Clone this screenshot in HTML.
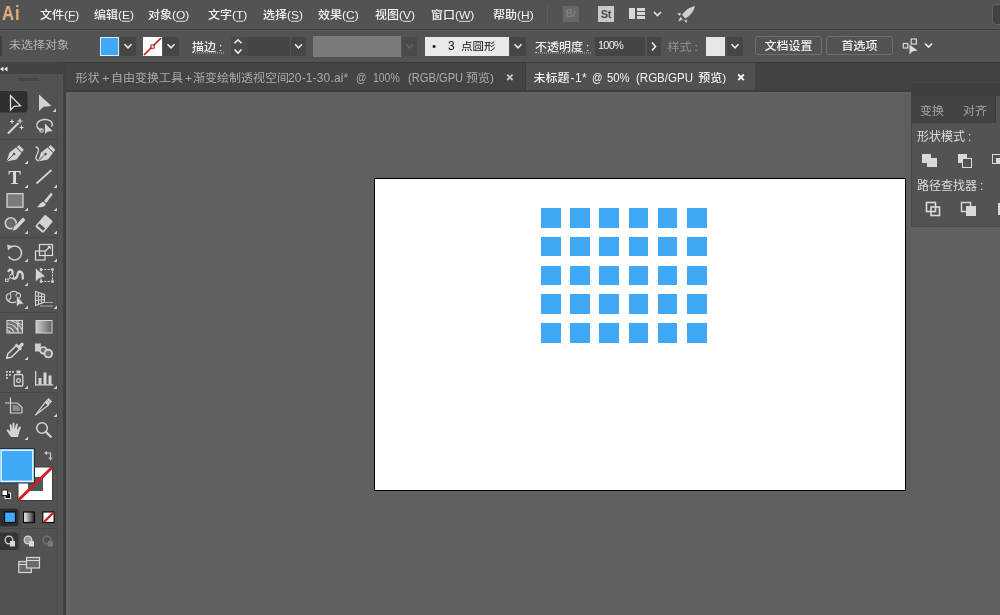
<!DOCTYPE html>
<html lang="zh-CN">
<head>
<meta charset="utf-8">
<title>Adobe Illustrator</title>
<style>
*{box-sizing:border-box;margin:0;padding:0}
html,body{width:1000px;height:615px;overflow:hidden;background:#606060}
body{position:relative;font-family:"Liberation Sans","Noto Sans CJK SC",sans-serif;font-size:12px;color:#e6e6e6;line-height:1}
.abs{position:absolute}
#menubar,#ctrl,#tabbar,#rpanel,#toolsvg{will-change:transform}
#menubar{left:0;top:0;width:1000px;height:30px;background:#535353;border-bottom:1px solid #3b3b3b;box-shadow:inset 0 -1px 0 #5a5a5a}
#menubar .mi{position:absolute;top:8px;height:14px;line-height:14px;white-space:nowrap;color:#f2f2f2;font-size:12px;font-weight:500;transform:scaleY(0.9);transform-origin:0 11px}
#menubar u{text-decoration:underline;text-underline-offset:2px}
#logo{left:2.4px;top:1px;font-size:21px;font-weight:bold;color:#e0ae78;line-height:24px;letter-spacing:1.2px;transform:scaleX(0.8);transform-origin:0 0}
#ctrl{left:0;top:29px;width:1000px;height:33px;background:#535353;box-shadow:inset 0 1px 0 #3b3b3b,inset 0 2px 0 #5a5a5a}
#ctrl .t{position:absolute;white-space:nowrap;line-height:14px;height:14px;font-size:12px;transform:scaleY(0.9);transform-origin:0 8px}
.pl{transform:scaleY(0.9);transform-origin:0 9px}
.seg{position:absolute;top:9px;line-height:14px;height:14px;white-space:nowrap;transform:scaleY(0.9);transform-origin:0 8px}
.btn{border:1px solid #707070;border-radius:3px;color:#f0f0f0;text-align:center;line-height:18px;font-size:12px;font-weight:500}
.btn span{display:inline-block;transform:scaleY(0.9);transform-origin:0 11px}
.dk{position:absolute;background:#454545;border-radius:2px}
#tabbar{left:0;top:62px;width:1000px;height:30px;background:#424242;box-shadow:inset 0 1px 0 #3a3a3a}
#tools{left:0;top:74px;width:63px;height:541px;background:#525252}
#toolgap{left:63px;top:92px;width:3px;height:523px;background:#404040}
#toolhead{left:0;top:62px;width:63px;height:12px;background:#424242}
#canvas{left:66px;top:92px;width:934px;height:523px;background:#606060;box-shadow:inset 0 2px 0 #646464,inset 4px 0 0 #656565}
#vstrip{left:905px;top:94px;width:6px;height:396px;background:#5e5e5e;border-left:1px solid #5a5a5a}
#artboard{left:374px;top:178px;width:532px;height:313px;background:#fff;border:1px solid #000}
.sq{position:absolute;width:19.5px;height:19.5px;background:#3fa9f5}
#rpanel{left:911px;top:82px;width:89px;height:145px;background:#535353;box-shadow:inset 1px 0 0 #454545,inset 0 -1px 0 #484848}
svg{position:absolute;overflow:visible}
</style>
</head>
<body>
<div id="canvas" class="abs"></div>
<div id="vstrip" class="abs"></div>
<div id="artboard" class="abs"></div>
<div id="grid">
<div class="sq" style="left:541.0px;top:208.0px"></div><div class="sq" style="left:570.2px;top:208.0px"></div><div class="sq" style="left:599.4px;top:208.0px"></div><div class="sq" style="left:628.6px;top:208.0px"></div><div class="sq" style="left:657.8px;top:208.0px"></div><div class="sq" style="left:687.0px;top:208.0px"></div>
<div class="sq" style="left:541.0px;top:236.8px"></div><div class="sq" style="left:570.2px;top:236.8px"></div><div class="sq" style="left:599.4px;top:236.8px"></div><div class="sq" style="left:628.6px;top:236.8px"></div><div class="sq" style="left:657.8px;top:236.8px"></div><div class="sq" style="left:687.0px;top:236.8px"></div>
<div class="sq" style="left:541.0px;top:265.5px"></div><div class="sq" style="left:570.2px;top:265.5px"></div><div class="sq" style="left:599.4px;top:265.5px"></div><div class="sq" style="left:628.6px;top:265.5px"></div><div class="sq" style="left:657.8px;top:265.5px"></div><div class="sq" style="left:687.0px;top:265.5px"></div>
<div class="sq" style="left:541.0px;top:294.2px"></div><div class="sq" style="left:570.2px;top:294.2px"></div><div class="sq" style="left:599.4px;top:294.2px"></div><div class="sq" style="left:628.6px;top:294.2px"></div><div class="sq" style="left:657.8px;top:294.2px"></div><div class="sq" style="left:687.0px;top:294.2px"></div>
<div class="sq" style="left:541.0px;top:323.0px"></div><div class="sq" style="left:570.2px;top:323.0px"></div><div class="sq" style="left:599.4px;top:323.0px"></div><div class="sq" style="left:628.6px;top:323.0px"></div><div class="sq" style="left:657.8px;top:323.0px"></div><div class="sq" style="left:687.0px;top:323.0px"></div>
</div>
<div id="menubar" class="abs">
  <div id="logo" class="abs">Ai</div>
  <span class="mi" style="left:40px">文件(<u>F</u>)</span>
  <span class="mi" style="left:94px">编辑(<u>E</u>)</span>
  <span class="mi" style="left:148px">对象(<u>O</u>)</span>
  <span class="mi" style="left:208px">文字(<u>T</u>)</span>
  <span class="mi" style="left:263px">选择(<u>S</u>)</span>
  <span class="mi" style="left:318px">效果(<u>C</u>)</span>
  <span class="mi" style="left:375px">视图(<u>V</u>)</span>
  <span class="mi" style="left:431px">窗口(<u>W</u>)</span>
  <span class="mi" style="left:493px">帮助(<u>H</u>)</span>

  <div class="abs" style="left:547px;top:5px;width:1px;height:20px;background:#5e5e5e"></div>
  <div class="abs" style="left:563px;top:6px;width:16px;height:16px;background:#676767;color:#7d7d7d;font-size:10px;font-weight:bold;line-height:16px;text-align:center;letter-spacing:-0.3px">Br</div>
  <div class="abs" style="left:598px;top:6px;width:16px;height:16px;background:#c9c9c9;color:#4a4a4a;font-size:11px;font-weight:bold;line-height:16px;text-align:center;letter-spacing:-0.3px">St</div>
  <svg style="left:629px;top:7px" width="70" height="16" viewBox="629 7 70 16">
    <rect x="629" y="8" width="6" height="11" fill="#d8d8d8"/>
    <rect x="637" y="8" width="8" height="3" fill="#d8d8d8"/>
    <rect x="637" y="12" width="8" height="3" fill="#d8d8d8"/>
    <rect x="637" y="16" width="8" height="3" fill="#d8d8d8"/>
    <path d="M654 12 L657.5 15.5 L661 12" fill="none" stroke="#e4e4e4" stroke-width="1.6"/>
    <path d="M695 6 C690 7 685 10 682 15 L685.5 18.5 C690.5 15.5 694 11 695 6 Z M681 13 L677 13.5 L680 16 Z M687 19.5 L686.5 23 L684 20.5 Z M680.5 17 L678 21.5 L683 19.5 Z" fill="#cfcfcf"/>
  </svg>
  <div class="abs" style="left:992px;top:4px;width:12px;height:21px;background:#414141;border:1px solid #616161;border-radius:4px"></div>
</div>
<div id="ctrl" class="abs">
  <div class="abs" style="left:0;top:7px;width:2px;height:20px;background:#414141"></div>
  <span class="t" style="left:9px;top:9px;color:#b4b4b4">未选择对象</span>
  <div class="abs" style="left:100px;top:8px;width:19px;height:19px;background:#3fa9f5;border:1px solid #d6efff"></div>
  <div class="dk" style="left:120px;top:8px;width:16px;height:19px"></div>
  <div class="abs" style="left:143px;top:8px;width:19px;height:19px;background:#fff"></div>
  <div class="dk" style="left:163px;top:8px;width:16px;height:19px"></div>
  <span class="t" style="left:192px;top:11px;color:#f0f0f0;font-weight:500;border-bottom:1px dotted #c4c4c4;height:14px;width:32px">描边<span style="margin-left:3px">:</span></span>
  <div class="dk" style="left:231px;top:8px;width:16px;height:19px;background:#4a4a4a"></div>
  <div class="dk" style="left:247px;top:8px;width:43px;height:19px;border-radius:0"></div>
  <div class="dk" style="left:291px;top:8px;width:15px;height:19px"></div>
  <div class="abs" style="left:313px;top:7px;width:88px;height:21px;background:#7b7b7b"></div>
  <div class="dk" style="left:402px;top:8px;width:15px;height:19px;background:#4a4a4a"></div>
  <div class="abs" style="left:425px;top:8px;width:84px;height:19px;background:#e9e9e9"></div>
  <span class="t" style="left:432px;top:10px;color:#111">•</span>
  <span class="t" style="left:448px;top:10px;color:#111;transform:none">3</span>
  <span class="t" style="left:461px;top:10px;color:#111;font-size:11.5px">点圆形</span>
  <div class="dk" style="left:510px;top:8px;width:16px;height:19px"></div>
  <span class="t" style="left:535px;top:11px;color:#f0f0f0;font-weight:500;border-bottom:1px dotted #c4c4c4;height:14px;width:56px">不透明度<span style="margin-left:3px">:</span></span>
  <div class="dk" style="left:595px;top:8px;width:50px;height:19px;border-radius:0"></div>
  <span class="t" style="left:598px;top:9px;color:#f0f0f0;font-size:11px;letter-spacing:-0.8px;transform:none">100%</span>
  <div class="dk" style="left:647px;top:8px;width:14px;height:19px"></div>
  <span class="t" style="left:667.5px;top:10.5px;color:#929292">样式<span style="margin-left:3px">:</span></span>
  <div class="abs" style="left:706px;top:8px;width:19px;height:19px;background:#e6e6e6"></div>
  <div class="dk" style="left:727px;top:8px;width:16px;height:19px"></div>
  <div class="abs btn" style="left:755px;top:7px;width:67px;height:19px"><span>文档设置</span></div>
  <div class="abs btn" style="left:826px;top:7px;width:67px;height:19px"><span>首选项</span></div>
  <svg style="left:0;top:0" width="1000" height="33" viewBox="0 29 1000 33">
    <g fill="none" stroke="#ececec" stroke-width="1.6">
      <path d="M124.5 44.3 L128 47.8 L131.5 44.3"/>
      <path d="M167.5 44.3 L171 47.8 L174.5 44.3"/>
      <path d="M234.5 43.3 L238 39.8 L241.5 43.3"/>
      <path d="M234.5 49.5 L238 53 L241.5 49.5"/>
      <path d="M295 44.3 L298.5 47.8 L302 44.3"/>
      <path d="M514.5 44.3 L518 47.8 L521.5 44.3"/>
      <path d="M652 42.5 L655.5 46.5 L652 50.5"/>
      <path d="M731.5 44.3 L735 47.8 L738.5 44.3"/>
      <path d="M925 43.5 L928.5 47 L932 43.5"/>
    </g>
    <path d="M406 44.3 L409.5 47.8 L413 44.3" fill="none" stroke="#666" stroke-width="1.6"/>
    <path d="M144 55 L161 38" stroke="#c2181d" stroke-width="1.7"/>
    <rect x="151" y="45" width="3.2" height="3.2" fill="#fff" stroke="#a01015" stroke-width="1"/>
    <g fill="none" stroke="#d8d8d8" stroke-width="1.2">
      <rect x="911.2" y="39" width="5.2" height="5"/>
      <rect x="903.3" y="43.5" width="4.5" height="4.5"/>
    </g>
    <path d="M909.5 44.5 L909.5 54.5 L912.3 51.5 L917.5 50.5 Z" fill="#dcdcdc"/>
  </svg>
</div>
<div id="tabbar" class="abs">
  <div class="abs" style="left:66px;top:1px;width:459px;height:27px;background:#444"></div>
  <div class="segs" style="color:#ababab">
  <span class="seg" style="left:75.5px;font-size:12px;letter-spacing:0px">形状</span>
  <span class="seg" style="left:102.3px;font-size:12px;letter-spacing:0px">+</span>
  <span class="seg" style="left:111px;font-size:12px;letter-spacing:0px">自由变换工具</span>
  <span class="seg" style="left:185px;font-size:12px;letter-spacing:0px">+</span>
  <span class="seg" style="left:193px;font-size:12px;letter-spacing:0px">渐变绘制透视空间</span>
  <span class="seg" style="left:288px;font-size:12px;letter-spacing:0.15px;transform:scaleX(1);transform-origin:0 0">20-1-30.ai*</span>
  <span class="seg" style="left:355.8px;font-size:12px;letter-spacing:0px;transform:scaleX(0.86);transform-origin:0 0">@</span>
  <span class="seg" style="left:373px;font-size:12px;letter-spacing:0px;transform:scaleX(0.87);transform-origin:0 0">100%</span>
  <span class="seg" style="left:407.5px;font-size:12px;letter-spacing:0px;transform:scaleX(0.93);transform-origin:0 0">(RGB/GPU</span>
  <span class="seg" style="left:466px;font-size:12px;letter-spacing:0px">预览)</span>
  </div>
  <div class="abs" style="left:525px;top:1px;width:230px;height:27px;background:#505050;border-left:1px solid #3a3a3a"></div>
  <div class="segs" style="color:#f2f2f2;font-weight:500">
  <span class="seg" style="left:533.5px;font-size:12px;letter-spacing:0px">未标题</span>
  <span class="seg" style="left:570.5px;font-size:12px;letter-spacing:0.4px;transform:scaleX(1);transform-origin:0 0">-1*</span>
  <span class="seg" style="left:591.5px;font-size:12px;letter-spacing:0px;transform:scaleX(0.86);transform-origin:0 0">@</span>
  <span class="seg" style="left:607.3px;font-size:12px;letter-spacing:0px;transform:scaleX(0.94);transform-origin:0 0">50%</span>
  <span class="seg" style="left:636.2px;font-size:12px;letter-spacing:0px;transform:scaleX(0.96);transform-origin:0 0">(RGB/GPU</span>
  <span class="seg" style="left:698.3px;font-size:12px;letter-spacing:0px">预览)</span>
  </div>
  <svg style="left:0;top:0" width="1000" height="30" viewBox="0 62 1000 30">
    <path d="M507.2 74.6 L512.6 80 M512.6 74.6 L507.2 80" stroke="#c4c4c4" stroke-width="1.8"/>
    <path d="M738.2 74.5 L743.8 80.1 M743.8 74.5 L738.2 80.1" stroke="#f4f4f4" stroke-width="1.9"/>
  </svg>
  <div class="abs" style="left:66px;top:28px;width:934px;height:2px;background:#3c3c3c"></div>
</div>
<div id="toolhead" class="abs"></div>
<div id="tools" class="abs"></div>
<div id="toolgap" class="abs"></div>
<!--TS--><svg id="toolsvg" style="left:0;top:62px" width="66" height="553" viewBox="0 62 66 553">
  <defs>
    <linearGradient id="gA" x1="0" y1="0" x2="1" y2="0"><stop offset="0" stop-color="#cdcdcd"/><stop offset="1" stop-color="#626262"/></linearGradient>
    <linearGradient id="gB" x1="0" y1="0" x2="1" y2="0"><stop offset="0" stop-color="#fff"/><stop offset="1" stop-color="#222"/></linearGradient>
  </defs>
  <!-- collapse chevrons -->
  <path d="M3.5 66.5 L0 69 L3.5 71.5 Z M7.5 66.5 L4 69 L7.5 71.5 Z" fill="#e8e8e8"/>
  <!-- gripper -->
  <rect x="18" y="78" width="21" height="3" fill="#474747"/>
  <!-- separators -->
  <g stroke="#484848" stroke-width="1">
    <path d="M0 139.5 H57 M0 237.5 H57 M0 312.5 H57 M0 392.5 H57"/>
  </g>
  <path d="M57.5 74 V615" stroke="#4a4a4a" stroke-width="1"/>
  <!-- selected tool bg -->
  <path d="M0 91 H24 Q27.5 91 27.5 94.5 V109 Q27.5 112.5 24 112.5 H0 Z" fill="#2f2f2f"/>
  <!-- corner triangles -->
  <g fill="#d2d2d2">
    <path d="M56 108.6 V112 H52.6 Z"/>
    <path d="M28 160.6 V164 H24.6 Z"/>
    <path d="M28 184.6 V188 H24.6 Z M57 184.6 V188 H53.6 Z"/>
    <path d="M28 207.6 V211 H24.6 Z M57 207.6 V211 H53.6 Z"/>
    <path d="M28 230.6 V234 H24.6 Z M57 230.6 V234 H53.6 Z"/>
    <path d="M28 258.6 V262 H24.6 Z M57 258.6 V262 H53.6 Z"/>
    <path d="M28 282.6 V286 H24.6 Z"/>
    <path d="M28 305.6 V309 H24.6 Z M57 305.6 V309 H53.6 Z"/>
    <path d="M28 356.6 V360 H24.6 Z"/>
    <path d="M28 385.6 V389 H24.6 Z M57 385.6 V389 H53.6 Z"/>
    <path d="M57 413.6 V417 H53.6 Z"/>
    <path d="M28 436.6 V440 H24.6 Z"/>
  </g>
  <!-- row1: selection, direct selection -->
  <path d="M10.5 95.5 V110 L14.2 106.3 L20.5 105.8 Z" fill="none" stroke="#dedede" stroke-width="1.3" stroke-linejoin="miter"/>
  <path d="M39 94.5 V111 L43.5 106.8 L51.5 106 Z" fill="#d4d4d4"/>
  <!-- row2: magic wand, lasso -->
  <g stroke="#d8d8d8" fill="none">
    <path d="M8 133.5 L18.5 123" stroke-width="2"/>
    <path d="M20 118.5 V123.5 M17.5 121 H22.5" stroke-width="1.2"/>
    <path d="M12 119.5 V123.5 M10 121.5 H14" stroke-width="1.2"/>
    <path d="M21.5 125.5 V129.5 M19.5 127.5 H23.5" stroke-width="1.2"/>
  </g>
  <path d="M42 130 C37 129.5 35.5 125 38 122 C40.5 119 47 118.5 50.5 121 C52.5 122.5 52.8 125 51.5 126.5" fill="none" stroke="#d4d4d4" stroke-width="1.5"/>
  <circle cx="41.5" cy="130.5" r="1.8" fill="none" stroke="#d4d4d4" stroke-width="1.1"/>
  <path d="M44.5 122.5 V135 L47.5 132 L53.5 131.5 Z" fill="#d4d4d4" stroke="#525252" stroke-width="0.8"/>
  <!-- row3: pen, curvature pen -->
  <g id="pen">
    <path d="M6.5 161.5 L9.5 152.5 L16 147.5 L21.5 153 L16.5 159.5 Z" fill="#d4d4d4"/>
    <path d="M16.5 147 L19 144.8 L24 149.8 L22 152.5 Z" fill="#d4d4d4" stroke="#525252" stroke-width="0.6"/>
    <path d="M7 161 L13.5 154.5" stroke="#525252" stroke-width="1"/>
    <circle cx="14" cy="154" r="1.3" fill="#525252"/>
  </g>
  <g transform="translate(31.5,0)">
    <path d="M6.5 161.5 L9.5 152.5 L16 147.5 L21.5 153 L16.5 159.5 Z" fill="#d4d4d4"/>
    <path d="M16.5 147 L19 144.8 L24 149.8 L22 152.5 Z" fill="#d4d4d4" stroke="#525252" stroke-width="0.6"/>
    <path d="M7 161 L13.5 154.5" stroke="#525252" stroke-width="1"/>
    <circle cx="14" cy="154" r="1.3" fill="#525252"/>
  </g>
  <path d="M35.5 147 C39 147 39 150.5 37.5 153.5 C35.5 157 35 160.5 38.5 160.5" fill="none" stroke="#d4d4d4" stroke-width="1.3"/>
  <!-- row4: type, line -->
  <text x="14.7" y="183.5" font-family="'Liberation Serif',serif" font-size="19" font-weight="bold" text-anchor="middle" fill="#dcdcdc">T</text>
  <path d="M36.5 183.5 L51.5 170" stroke="#d4d4d4" stroke-width="1.7"/>
  <!-- row5: rectangle, brush -->
  <rect x="7" y="193.7" width="16" height="13.5" fill="#7a7a7a" stroke="#dcdcdc" stroke-width="1.2"/>
  <path d="M44 201 L51 192.8 L52.8 194.3 L46.3 203 Z" fill="#d4d4d4"/>
  <path d="M43.3 201.8 L45.8 203.9 C45 207 41 207.5 36.5 207.3 C39.5 206 39.5 202.5 43.3 201.8 Z" fill="#d4d4d4"/>
  <!-- row6: shaper, eraser -->
  <circle cx="10.8" cy="223.3" r="5.5" fill="#686868" stroke="#d0d0d0" stroke-width="1.6"/>
  <path d="M12.3 231.3 L13.4 227 L22.9 217.1 L25.9 219.9 L16.4 230 Z" fill="#d4d4d4" stroke="#525252" stroke-width="0.8"/>
  <g transform="rotate(40 44 223.5)">
    <rect x="39" y="216" width="10.5" height="15.5" rx="1.5" fill="#d4d4d4"/>
    <rect x="40.5" y="226.5" width="7.5" height="3" fill="#505050"/>
  </g>
  <!-- row7: rotate, scale -->
  <path d="M9.5 248 A7 7 0 1 1 8.5 256.5" fill="none" stroke="#d0d0d0" stroke-width="1.5"/>
  <path d="M7 244.5 L12.5 246 L8 250.5 Z" fill="#d0d0d0"/>
  <g fill="none" stroke="#dcdcdc" stroke-width="1.2">
    <rect x="39.5" y="244.5" width="13" height="11"/>
    <rect x="35.5" y="251" width="9.5" height="9"/>
    <path d="M45.5 251 L50 246.5"/>
  </g>
  <path d="M47.3 246 H50.7 V249.4 Z" fill="#dcdcdc"/>
  <!-- row8: width/warp, free transform -->
  <path d="M8.5 271 C10.5 268 13.5 270.5 12.3 274 C11 278 14.5 280.5 16.8 277 C18.3 274.5 17.3 271.3 19.8 271.5 C22.3 271.8 23 275 22.8 278.5" fill="none" stroke="#d4d4d4" stroke-width="2.3" stroke-linecap="round"/>
  <circle cx="11.6" cy="276.3" r="2" fill="#525252" stroke="#d4d4d4" stroke-width="1"/>
  <rect x="5.5" y="279" width="2.6" height="2.6" fill="#525252" stroke="#d4d4d4" stroke-width="0.9"/>
  <path d="M8 279.5 L10.3 277.8" stroke="#d4d4d4" stroke-width="0.9"/>
  <rect x="41" y="269.5" width="11.5" height="12" fill="none" stroke="#dcdcdc" stroke-width="1.1" stroke-dasharray="2 1.3"/>
  <g fill="#dcdcdc"><rect x="39.8" y="268.3" width="2.4" height="2.4"/><rect x="51.3" y="268.3" width="2.4" height="2.4"/><rect x="39.8" y="280.3" width="2.4" height="2.4"/><rect x="51.3" y="280.3" width="2.4" height="2.4"/></g>
  <path d="M35.5 268 V282 L39 278.5 L45.5 276.5 Z" fill="#d4d4d4" stroke="#525252" stroke-width="0.6"/>
  <!-- row9: shape builder, perspective grid -->
  <path d="M8 301 C5 298 6 293.5 10 293.5 C11 291 16 290.5 17.5 293 C21 292.5 21.5 297 19 298.5 C18 302.5 11 304 8 301 Z M10 293.5 C12 296 11 299 8 301 M17.5 293 C15 295.5 16 297.5 19 298.5" fill="none" stroke="#d0d0d0" stroke-width="1.2"/>
  <path d="M16.5 295.5 V307 L19.3 304.3 L24 304 Z" fill="#d4d4d4" stroke="#525252" stroke-width="0.6"/>
  <g fill="none" stroke="#d4d4d4" stroke-width="1.1">
    <path d="M35.5 291.5 V305.5 L44.5 302 V294.5 Z"/>
    <path d="M38.5 292.5 V304.3 M41.5 293.5 V303.2 M35.5 296 L44.5 297 M35.5 300.5 L44.5 299.5"/>
  </g>
  <path d="M44.5 302.5 H53 M40 306 H53" stroke="#a8a8a8" stroke-width="1"/>
  <!-- row10: mesh, gradient -->
  <g fill="none" stroke="#d4d4d4" stroke-width="1.1">
    <rect x="7" y="320.5" width="15.5" height="12.5" fill="#6e6e6e"/>
    <path d="M7 327.5 C10.5 327 13.5 329.5 14 333 M7 323.8 C12.5 323.5 17.5 327.5 18.5 333 M10.5 320.5 C15.5 322 20.5 326 22.5 330.5 M15.5 320.5 C17.5 322.8 20 324.3 22.5 324.8 M18.3 320.5 C17 324.5 18.5 329 17.8 333 M7 330.5 C9 330.5 10 331.5 10.5 333"/>
  </g>
  <rect x="36" y="320.5" width="16" height="12.5" fill="url(#gA)" stroke="#d4d4d4" stroke-width="1"/>
  <!-- row11: eyedropper, blend -->
  <path d="M6.8 358 L7.8 354 L16.3 345.5 L19.8 349 L11.3 357.3 Z" fill="none" stroke="#d4d4d4" stroke-width="1.5"/>
  <path d="M14.8 345 L20.3 350.5 L22 348.8 L21 347.8 L23.2 345.6 C24.8 344 22.6 341.6 20.8 343.2 L18.7 345.4 L16.6 343.4 Z" fill="#d4d4d4"/>
  <rect x="35" y="343.5" width="5.8" height="8" fill="#cfcfcf"/>
  <circle cx="43.3" cy="350.3" r="3.3" fill="#6c6c6c" stroke="#d4d4d4" stroke-width="1.7"/>
  <circle cx="48.3" cy="353.6" r="3.8" fill="#6c6c6c" stroke="#d4d4d4" stroke-width="1.9"/>
  <!-- row12: symbol sprayer, graph -->
  <g fill="#d4d4d4">
    <rect x="6" y="371" width="1.8" height="1.8"/><rect x="9" y="371" width="1.8" height="1.8"/><rect x="12" y="371" width="1.8" height="1.8"/>
    <rect x="6" y="374" width="1.8" height="1.8"/><rect x="9" y="374" width="1.8" height="1.8"/>
    <rect x="6" y="377" width="1.8" height="1.8"/>
    <rect x="16.5" y="370.5" width="4" height="3"/>
  </g>
  <rect x="14.2" y="374.7" width="8.6" height="11.3" rx="1" fill="none" stroke="#d4d4d4" stroke-width="1.3"/>
  <circle cx="18.5" cy="380.5" r="1.9" fill="none" stroke="#d4d4d4" stroke-width="1.2"/>
  <g fill="#d4d4d4">
    <rect x="35" y="371" width="1.3" height="14.5"/>
    <rect x="35" y="384.2" width="18" height="1.3"/>
    <rect x="38.5" y="378" width="3" height="6.5"/>
    <rect x="43.5" y="372.5" width="3" height="12"/>
    <rect x="48.5" y="375.5" width="3" height="9"/>
  </g>
  <!-- row13: artboard, slice -->
  <g fill="none" stroke="#d4d4d4" stroke-width="1.2">
    <path d="M10.5 397.5 V413 H22 M5 403 H17.5 L22 407.5 V413"/>
  </g>
  <path d="M12.5 405 H17 L20 408 V411 H12.5 Z" fill="#8a8a8a"/>
  <path d="M35.5 415 L45.3 402.2 L48.3 405.2 Z" fill="#525252" stroke="#d4d4d4" stroke-width="1.2" stroke-linejoin="round"/>
  <path d="M45 401.8 L48.6 398 L52 401.4 L48.4 405.2 Z" fill="#d4d4d4"/>
  <path d="M47.3 400.2 L50 403" stroke="#8a8a8a" stroke-width="0.8"/>
  <!-- row14: hand, zoom -->
  <path d="M11 437 C9.5 434.5 8 432.5 6.8 431 C6.2 429.8 7.7 429 8.7 430 L10.3 431.7 L9.7 425.3 C9.6 424 11.3 423.8 11.5 425 L12.3 429.5 L12.6 423.5 C12.7 422.2 14.4 422.2 14.5 423.5 L14.7 429.3 L16 424.3 C16.3 423.1 18 423.5 17.8 424.7 L17 430 L19.3 426.8 C20 425.9 21.4 426.7 20.9 427.8 C19.8 430.5 19 433 18 437 Z" fill="#d4d4d4"/>
  <circle cx="42" cy="428" r="5.3" fill="none" stroke="#d4d4d4" stroke-width="1.5"/>
  <path d="M46 432 L50.8 436.8" stroke="#d4d4d4" stroke-width="2.2" stroke-linecap="round"/>
  <!-- fill / stroke -->
  <rect x="18" y="467" width="34.5" height="33.5" fill="#fff" stroke="#3a3a3a" stroke-width="1"/>
  <rect x="28" y="477" width="15" height="14" fill="#4a5a55"/>
  <path d="M18.5 500 L52 467.5" stroke="#cf1f26" stroke-width="3"/>
  <rect x="-0.5" y="448.5" width="35" height="34.5" fill="#3fa9f5" stroke="#2d2d2d" stroke-width="1"/>
  <rect x="1.2" y="450.2" width="31.6" height="31.1" fill="none" stroke="#d9f1ff" stroke-width="1.6"/>
  <g fill="none" stroke="#c8c8c8" stroke-width="1.2">
    <path d="M46 453 H50.5 V458"/>
  </g>
  <path d="M44 453 L47 450.8 V455.2 Z M50.5 460.5 L48.3 457.5 H52.7 Z" fill="#c8c8c8"/>
  <rect x="5" y="493" width="5.5" height="5.5" fill="#000" stroke="#eee" stroke-width="1"/>
  <rect x="2" y="490" width="5.5" height="5.5" fill="#fff" stroke="#222" stroke-width="1"/>
  <!-- color / gradient / none -->
  <path d="M0 508.5 H15 Q18.5 508.5 18.5 512 V523 Q18.5 526.5 15 526.5 H0 Z" fill="#2d2d2d"/>
  <path d="M19.5 506 V552" stroke="#484848" stroke-width="1"/>
  <rect x="4.5" y="512" width="11" height="10.5" fill="#3fa9f5" stroke="#0c0c0c" stroke-width="1.2"/>
  <rect x="23.5" y="512" width="11" height="10.5" fill="url(#gB)" stroke="#0c0c0c" stroke-width="1.2"/>
  <rect x="42.8" y="512" width="11.3" height="10.5" fill="#fff" stroke="#0c0c0c" stroke-width="1.2"/>
  <path d="M44 522 L53.5 512.5" stroke="#cf1f26" stroke-width="2.4"/>
  <path d="M0 528.5 H57" stroke="#484848"/>
  <!-- draw modes -->
  <path d="M0 532.5 H15 Q18.5 532.5 18.5 536 V546.5 Q18.5 550 15 550 H0 Z" fill="#353535"/>
  <g id="dm">
    <circle cx="9" cy="540" r="3.8" fill="none" stroke="#d8d8d8" stroke-width="1.3"/>
    <rect x="10" y="541" width="5" height="5.5" fill="#d8d8d8"/>
  </g>
  <g transform="translate(19,0)">
    <circle cx="9" cy="540" r="3.8" fill="#9a9a9a" stroke="#d8d8d8" stroke-width="1.3"/>
    <rect x="10" y="541" width="5" height="5.5" fill="#d8d8d8"/>
  </g>
  <g transform="translate(38,0)" opacity="0.28">
    <circle cx="9" cy="540" r="3.8" fill="none" stroke="#d8d8d8" stroke-width="1.3"/>
    <rect x="10" y="541" width="5" height="5.5" fill="#d8d8d8"/>
  </g>
  <!-- screen mode -->
  <g fill="#6a6a6a" stroke="#d8d8d8" stroke-width="1.2">
    <rect x="18.8" y="561.5" width="12.5" height="11"/>
    <rect x="26.5" y="557.5" width="13" height="10.5"/>
  </g>
  <path d="M26.5 560.5 H39.5 M18.8 564.5 H26" stroke="#d8d8d8" stroke-width="1.2"/>
</svg>
<!--TE-->
<div id="rpanel" class="abs">
  <div class="abs" style="left:0;top:0;width:89px;height:14px;background:#3f3f3f;border-top:1px solid #484848"></div>
  <div class="abs" style="left:0;top:14px;width:89px;height:27px;background:#434343"></div>
  <div class="abs" style="left:84px;top:14px;width:5px;height:27px;background:#535353;border-left:1px solid #3c3c3c"></div>
  <span class="abs pl" style="left:9px;top:22px;line-height:14px;color:#a4a4a4;font-size:12px;white-space:nowrap">变换</span>
  <span class="abs pl" style="left:52px;top:22px;line-height:14px;color:#a4a4a4;font-size:12px;white-space:nowrap">对齐</span>
  <span class="abs" style="left:6px;top:47.5px;line-height:14px;color:#dcdcdc;font-size:12px;white-space:nowrap">形状模式<span style="margin-left:3px">:</span></span>
  <span class="abs" style="left:6px;top:97px;line-height:14px;color:#dcdcdc;font-size:12px;white-space:nowrap">路径查找器<span style="margin-left:3px">:</span></span>
  <svg style="left:0;top:0" width="89" height="145" viewBox="911 82 89 145">
    <g fill="#d9d9d9">
      <path d="M922 154 H931 V158 H937 V167 H927 V163 H922 Z"/>
      <rect x="958" y="154" width="9" height="9"/>
      <rect x="962.5" y="158.5" width="9" height="9" fill="#535353" stroke="#d9d9d9"/>
      <rect x="992.5" y="154.5" width="9" height="9" fill="none" stroke="#d9d9d9"/>
      <rect x="996" y="158" width="6" height="6"/>
      <rect x="961.5" y="202.5" width="9" height="9" fill="none" stroke="#d9d9d9" stroke-width="1.4"/>
      <rect x="966" y="206" width="10" height="10"/>
      <rect x="998" y="203" width="4" height="12"/>
    </g>
    <g fill="none" stroke="#d9d9d9" stroke-width="1.6">
      <rect x="926.5" y="202.5" width="9" height="9"/>
      <rect x="931" y="207" width="8.5" height="8.5"/>
    </g>
  </svg>
</div>
</body>
</html>
